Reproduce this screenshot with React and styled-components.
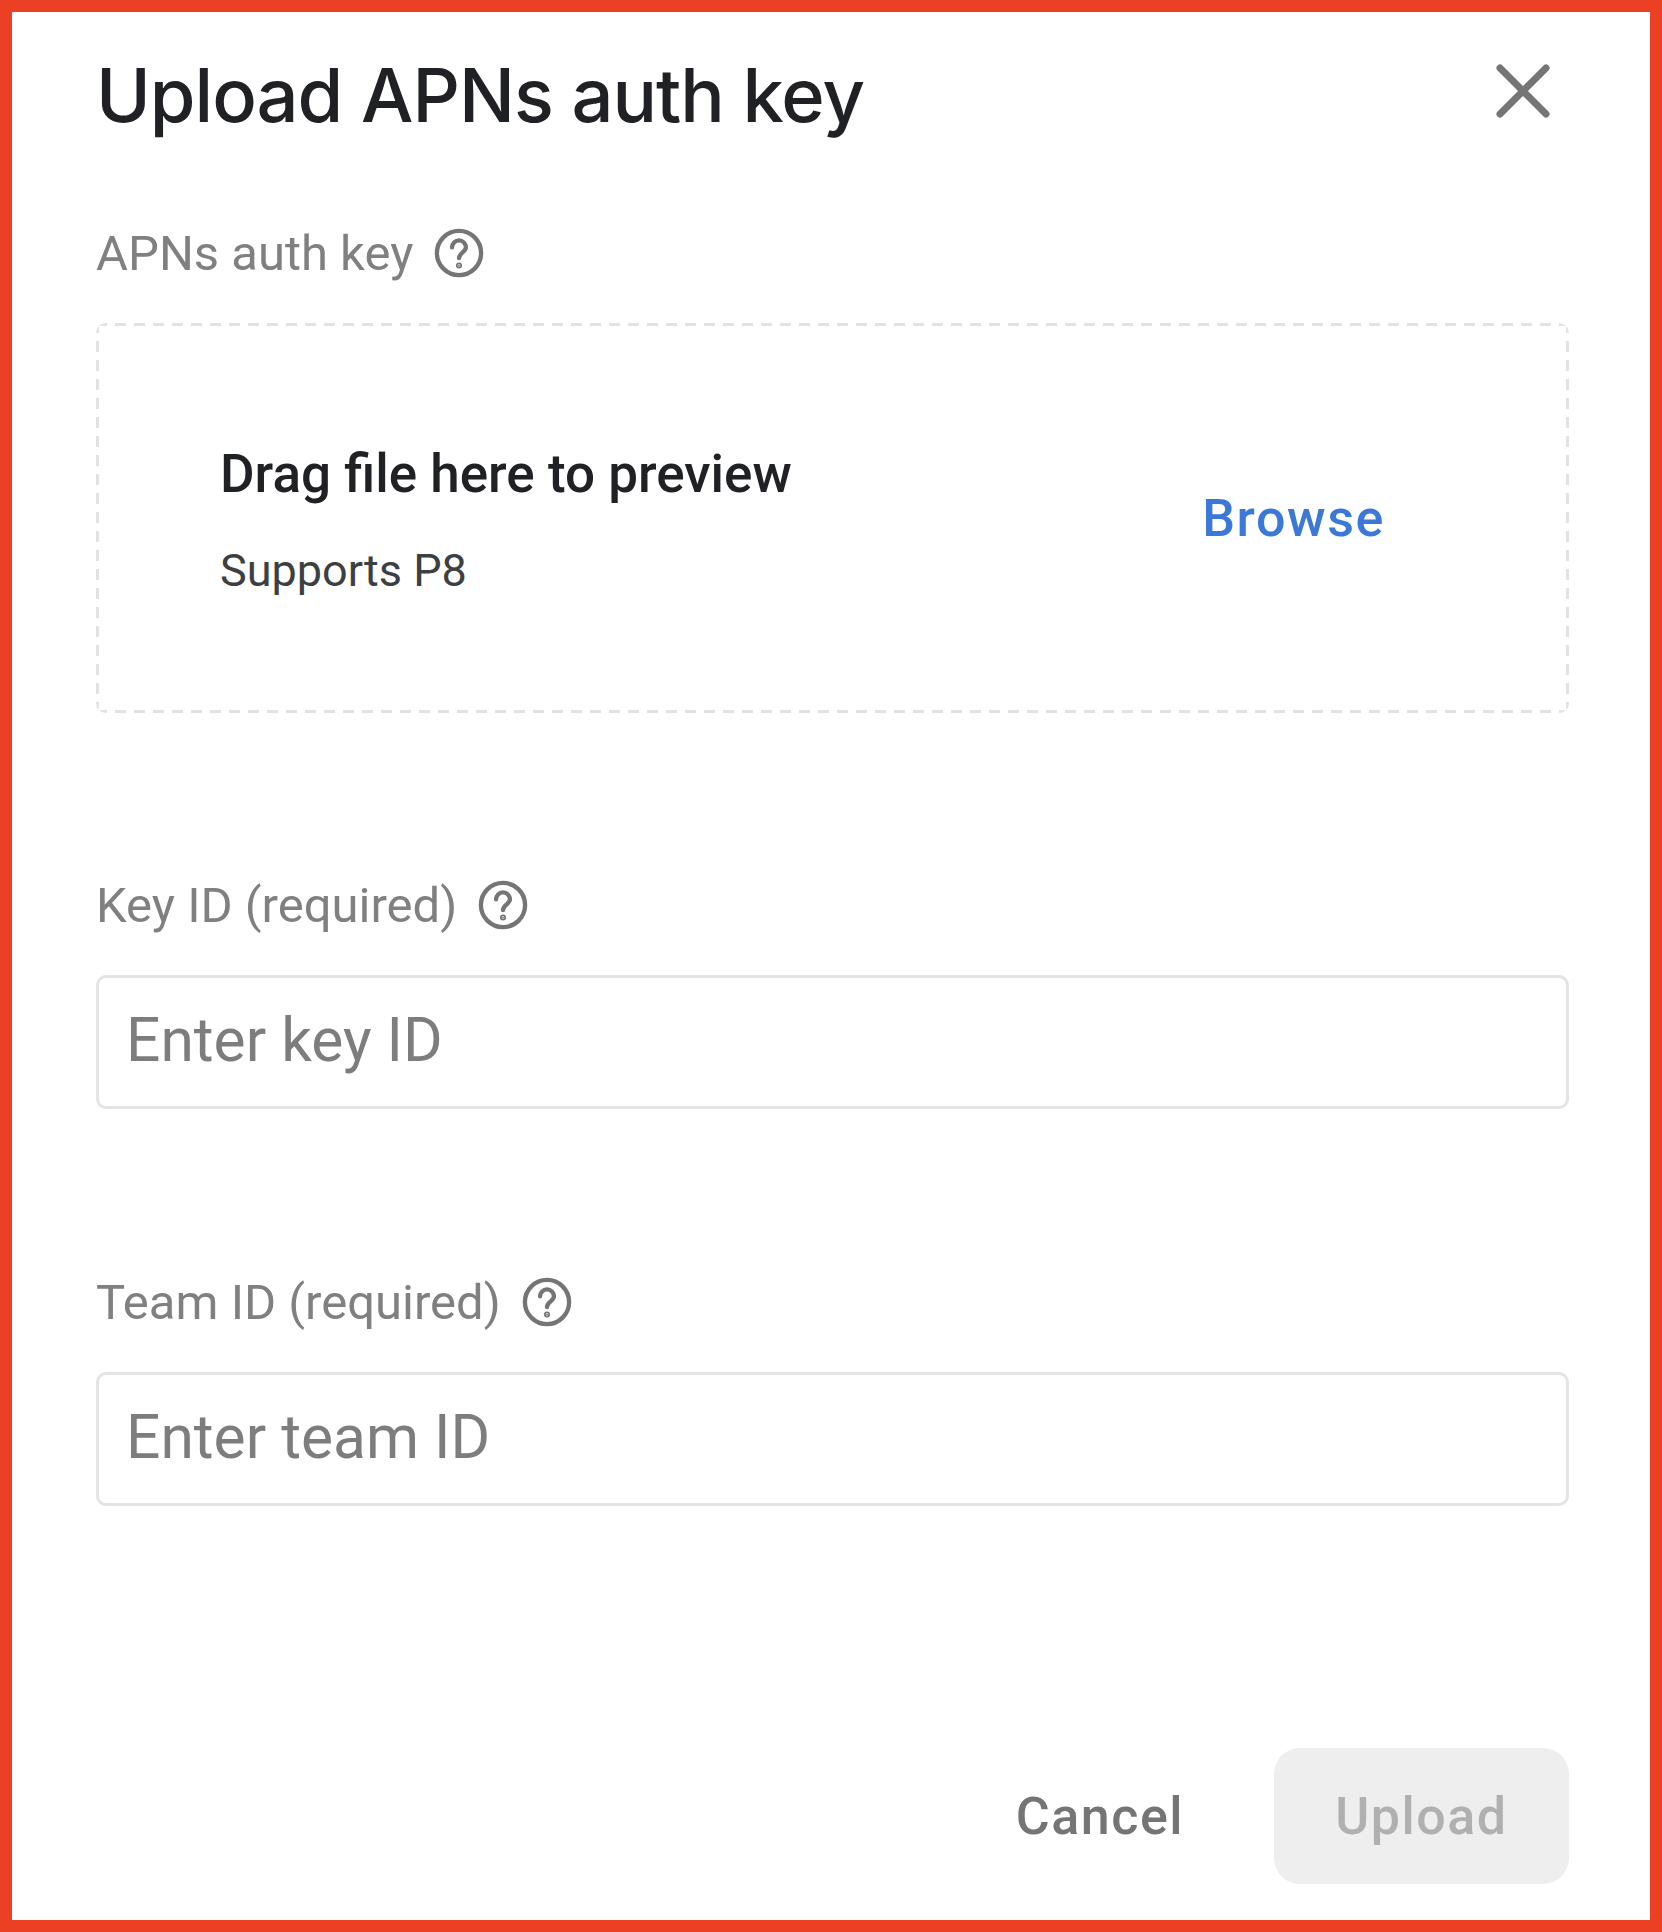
import React from 'react';
import styled, { createGlobalStyle } from 'styled-components';

const GlobalStyle = createGlobalStyle`
  html, body {
    margin: 0;
    padding: 0;
    background: #ec4024;
  }
  * {
    box-sizing: border-box;
  }
`;

const Frame = styled.div`
  width: 1662px;
  height: 1932px;
  border: 12px solid #ec4024;
  background: #ffffff;
  font-family: Roboto, "Liberation Sans", sans-serif;
`;

const Dialog = styled.div`
  display: flex;
  flex-direction: column;
  height: 100%;
  padding: 0 81px 36px 84px;
`;

const Header = styled.div`
  display: flex;
  justify-content: space-between;
  align-items: center;
  height: 104px;
  margin-top: 31px;
`;

const Title = styled.h1`
  margin: 0;
  font-family: Inter, Roboto, sans-serif;
  font-size: 74px;
  font-weight: 500;
  line-height: 104px;
  letter-spacing: -1px;
  color: #202124;
`;

const CloseButton = styled.button`
  display: flex;
  padding: 0;
  margin: 0 19px 8px 0;
  border: none;
  background: none;
`;

const Field = styled.div`
  margin-top: ${props => props.gap}px;
`;

const LabelRow = styled.div`
  display: flex;
  align-items: center;
  gap: 20px;
  height: 60px;
  font-size: 49px;
  color: #808080;
`;

const DropZone = styled.div`
  display: flex;
  align-items: center;
  justify-content: space-between;
  height: 390px;
  margin-top: 40px;
  padding: 0 184px 0 124px;
  border-radius: 10px;
  background:
    repeating-linear-gradient(90deg, #e2e2e2 0 11px, transparent 11px 19px) top / 100% 3px no-repeat,
    repeating-linear-gradient(90deg, #e2e2e2 0 11px, transparent 11px 19px) bottom / 100% 3px no-repeat,
    repeating-linear-gradient(0deg, #e2e2e2 0 11px, transparent 11px 19px) left / 3px 100% no-repeat,
    repeating-linear-gradient(0deg, #e2e2e2 0 11px, transparent 11px 19px) right / 3px 100% no-repeat;
`;

const DropText = styled.div`
  padding-top: 8px;
`;

const DropTitle = styled.div`
  font-size: 53px;
  font-weight: 500;
  line-height: 60px;
  color: #202124;
`;

const DropHint = styled.div`
  margin-top: 37px;
  font-size: 45px;
  line-height: 60px;
  color: #3c4043;
`;

const Browse = styled.span`
  font-size: 52px;
  font-weight: 500;
  letter-spacing: 1.6px;
  color: #3b78d8;
`;

const TextInput = styled.div`
  display: flex;
  align-items: center;
  height: 134px;
  margin-top: 40px;
  padding: 0 0 3px 27px;
  border: 3px solid #e4e4e4;
  border-radius: 10px;
  font-size: 60.5px;
  color: #7d7d7d;
`;

const Footer = styled.div`
  display: flex;
  justify-content: flex-end;
  align-items: center;
  gap: 90px;
  margin-top: auto;
`;

const CancelButton = styled.span`
  font-size: 52px;
  font-weight: 500;
  letter-spacing: 1.5px;
  color: #757575;
`;

const UploadButton = styled.span`
  display: flex;
  align-items: center;
  justify-content: center;
  width: 295px;
  height: 136px;
  border-radius: 26px;
  background: #eeeeee;
  font-size: 52px;
  font-weight: 500;
  letter-spacing: 1.5px;
  color: #b0b0b0;
`;

const HelpIcon = () => (
  <svg width="52" height="52" viewBox="0 0 24 24" fill="none" stroke="#757575" strokeWidth="2" strokeLinecap="round">
    <circle cx="12" cy="12" r="10.2" />
    <path d="M8.8 9.4a3.2 3.2 0 0 1 6.4 0c0 2.2-3.2 2.5-3.2 5" />
    <circle cx="12" cy="17.8" r="0.4" fill="#757575" />
  </svg>
);

const CloseIcon = () => (
  <svg width="54" height="54" viewBox="0 0 54 54" fill="none" stroke="#757575" strokeWidth="7" strokeLinecap="round">
    <path d="M4 4 L50 50 M50 4 L4 50" />
  </svg>
);

const App = () => (
  <>
    <GlobalStyle />
    <Frame>
      <Dialog>
        <Header>
          <Title>Upload APNs auth key</Title>
          <CloseButton><CloseIcon /></CloseButton>
        </Header>

        <Field gap={76}>
          <LabelRow>APNs auth key <HelpIcon /></LabelRow>
          <DropZone>
            <DropText>
              <DropTitle>Drag file here to preview</DropTitle>
              <DropHint>Supports P8</DropHint>
            </DropText>
            <Browse>Browse</Browse>
          </DropZone>
        </Field>

        <Field gap={162}>
          <LabelRow>Key ID (required) <HelpIcon /></LabelRow>
          <TextInput>Enter key ID</TextInput>
        </Field>

        <Field gap={163}>
          <LabelRow>Team ID (required) <HelpIcon /></LabelRow>
          <TextInput>Enter team ID</TextInput>
        </Field>

        <Footer>
          <CancelButton>Cancel</CancelButton>
          <UploadButton>Upload</UploadButton>
        </Footer>
      </Dialog>
    </Frame>
  </>
);

export default App;
